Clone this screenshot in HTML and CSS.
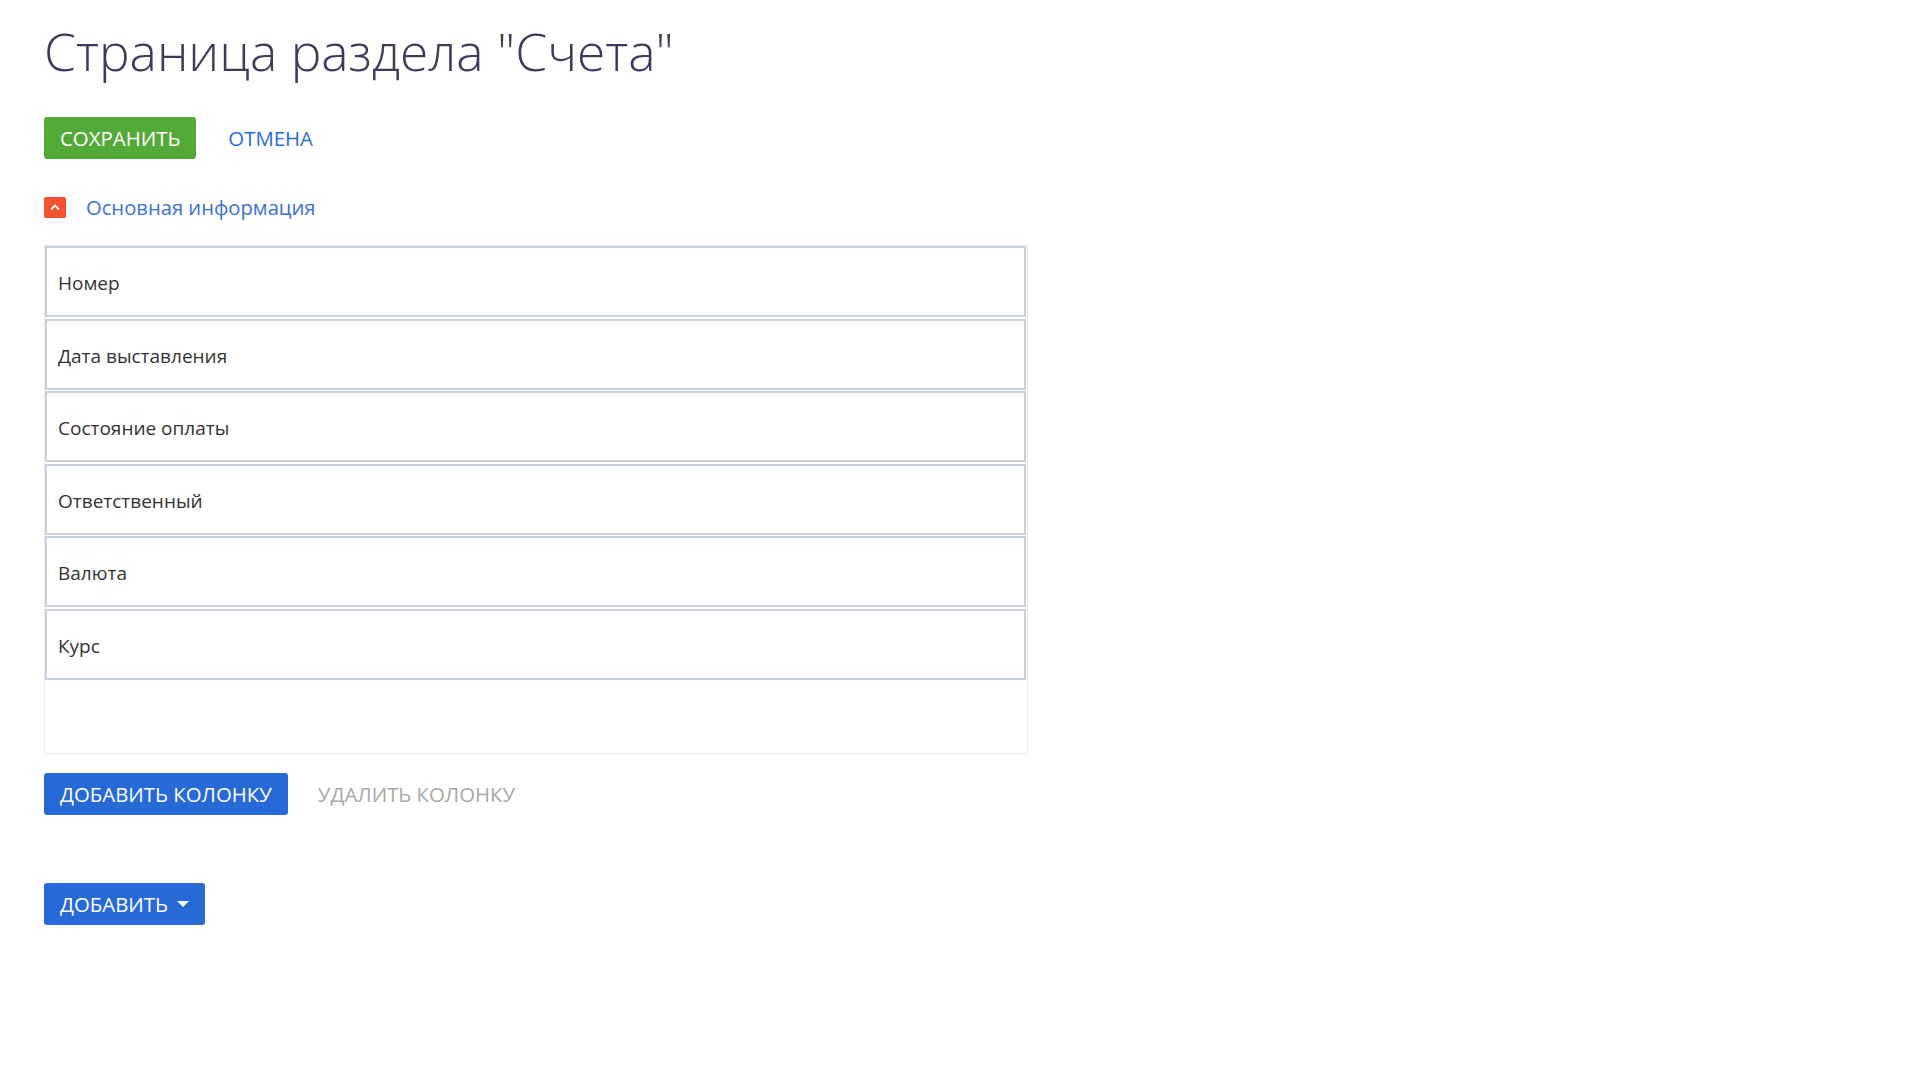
FILE: index.html
```html
<!DOCTYPE html>
<html lang="ru">
<head>
<meta charset="utf-8">
<title>Страница раздела "Счета"</title>
<link rel="stylesheet" href="styles.css">
</head>
<body>
<div class="page">
  <h1 class="title">Страница раздела "Счета"</h1>
  <div class="actions actions-top">
    <button class="btn btn-green">СОХРАНИТЬ</button>
    <button class="btn btn-link">ОТМЕНА</button>
  </div>
  <div class="section-head">
    <span class="toggle"><svg width="12" height="8" viewBox="0 0 12 8"><path d="M2 6.5 L6 2.5 L10 6.5" fill="none" stroke="#fff" stroke-width="1.8"/></svg></span>
    <span class="section-title">Основная информация</span>
  </div>
  <div class="fields">
    <div class="field">Номер</div>
    <div class="field">Дата выставления</div>
    <div class="field">Состояние оплаты</div>
    <div class="field">Ответственный</div>
    <div class="field">Валюта</div>
    <div class="field">Курс</div>
    <div class="dropzone"></div>
  </div>
  <div class="actions actions-cols">
    <button class="btn btn-blue">ДОБАВИТЬ КОЛОНКУ</button>
    <button class="btn btn-disabled">УДАЛИТЬ КОЛОНКУ</button>
  </div>
  <div class="actions actions-add">
    <button class="btn btn-blue btn-drop">ДОБАВИТЬ<span class="caret"></span></button>
  </div>
</div>
</body>
</html>
```
FILE: styles.css
```css
html, body {
  margin: 0;
  padding: 0;
  background: #fff;
}
body {
  font-family: "Open Sans", "Noto Sans", sans-serif;
  color: #333;
}
.page {
  padding: 0 44px;
}
.title {
  margin: 20px 0 0 0;
  font-size: 51.5px;
  line-height: 62px;
  font-weight: 300;
  color: #3b3b5c;
}
.actions {
  display: flex;
  align-items: center;
}
.actions-top {
  margin-top: 35px;
}
.btn {
  font-family: "Open Sans", "Noto Sans", sans-serif;
  font-size: 20.4px;
  height: 42px;
  padding: 0 16px;
  border: none;
  border-radius: 3px;
  background: none;
  cursor: pointer;
  display: flex;
  align-items: center;
}
.btn-green {
  background: #54aa38;
  color: #fff;
}
.btn-link {
  color: #2a6fd8;
  margin-left: 16px;
}
.btn-blue {
  background: #2769d7;
  color: #fff;
}
.btn-disabled {
  color: #a8a8a8;
  margin-left: 14px;
}
.section-head {
  display: flex;
  align-items: center;
  margin-top: 37px;
  height: 22px;
}
.toggle {
  width: 22px;
  height: 21px;
  border-radius: 2px;
  background: #f0532f;
  display: flex;
  align-items: center;
  justify-content: center;
}
.section-title {
  margin-left: 20px;
  font-size: 20.2px;
  color: #3c72d6;
}
.fields {
  margin-top: 27px;
  width: 981px;
  border: 1px solid #ececec;
  padding: 0 1px 0 0;
}
.field {
  height: 71px;
  box-sizing: border-box;
  margin-bottom: 1.5px;
  border: 2px solid #c9d1de;
  display: flex;
  align-items: center;
  padding: 3px 0 0 11px;
  font-size: 19px;
  color: #333;
}
.dropzone {
  height: 72px;
}
.actions-cols {
  margin-top: 19px;
}
.actions-add {
  margin-top: 68px;
}
.caret {
  display: inline-block;
  width: 0;
  height: 0;
  margin-left: 9px;
  border-left: 6px solid transparent;
  border-right: 6px solid transparent;
  border-top: 6px solid #fff;
}
```
